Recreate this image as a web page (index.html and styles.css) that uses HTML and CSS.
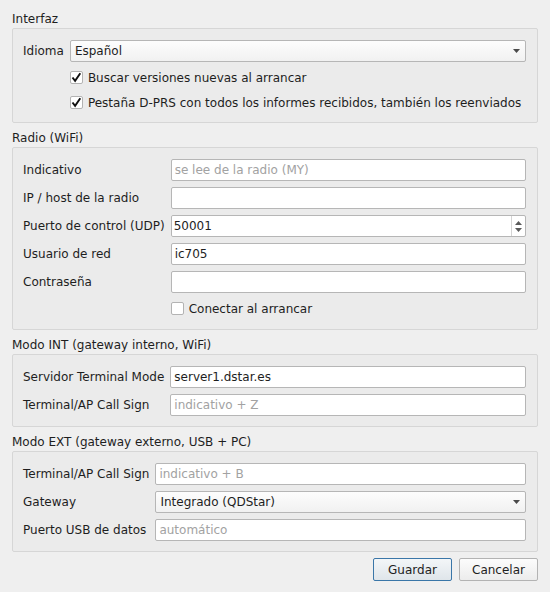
FILE: index.html
```html
<!DOCTYPE html>
<html lang="es">
<head>
    <meta charset="UTF-8">
    <meta name="viewport" content="width=device-width, initial-scale=1.0">
    <title>Preferencias</title>
    <link rel="stylesheet" href="styles.css">
</head>
<body>

    <!-- Interfaz -->
    <div class="group-title">Interfaz</div>
    <div class="group">
        <div class="form">
            <label>Idioma</label>
            <div class="combo">
                <span>Español</span>
                <svg class="arrow" width="7" height="4" viewBox="0 0 7 4"><path d="M0 0h7L3.5 4z"/></svg>
            </div>
            <div class="check-row">
                <span class="box"><svg width="11" height="11" viewBox="0 0 11 11"><path d="M1.5 5.5l2.6 3.4 5.2-7.6" fill="none" stroke="#111" stroke-width="1.9"/></svg></span>
                Buscar versiones nuevas al arrancar
            </div>
            <div class="check-row">
                <span class="box"><svg width="11" height="11" viewBox="0 0 11 11"><path d="M1.5 5.5l2.6 3.4 5.2-7.6" fill="none" stroke="#111" stroke-width="1.9"/></svg></span>
                Pestaña D-PRS con todos los informes recibidos, también los reenviados
            </div>
        </div>
    </div>

    <!-- Radio (WiFi) -->
    <div class="group-title">Radio (WiFi)</div>
    <div class="group radio">
        <div class="form">
            <label for="callsign">Indicativo</label>
            <input type="text" id="callsign" placeholder="se lee de la radio (MY)">

            <label for="host">IP / host de la radio</label>
            <input type="text" id="host">

            <label for="port">Puerto de control (UDP)</label>
            <div class="spin">
                <input type="text" id="port" value="50001">
                <div class="spin-buttons">
                    <svg width="7" height="4" viewBox="0 0 7 4"><path d="M0 4h7L3.5 0z"/></svg>
                    <svg width="7" height="4" viewBox="0 0 7 4"><path d="M0 0h7L3.5 4z"/></svg>
                </div>
            </div>

            <label for="user">Usuario de red</label>
            <input type="text" id="user" value="ic705">

            <label for="pass">Contraseña</label>
            <input type="text" id="pass">

            <div class="check-row">
                <span class="box"></span>
                Conectar al arrancar
            </div>
        </div>
    </div>

    <!-- Modo INT -->
    <div class="group-title">Modo INT (gateway interno, WiFi)</div>
    <div class="group">
        <div class="form">
            <label for="server">Servidor Terminal Mode</label>
            <input type="text" id="server" value="server1.dstar.es">

            <label for="intcall">Terminal/AP Call Sign</label>
            <input type="text" id="intcall" placeholder="indicativo + Z">
        </div>
    </div>

    <!-- Modo EXT -->
    <div class="group-title">Modo EXT (gateway externo, USB + PC)</div>
    <div class="group">
        <div class="form">
            <label for="extcall">Terminal/AP Call Sign</label>
            <input type="text" id="extcall" placeholder="indicativo + B">

            <label>Gateway</label>
            <div class="combo">
                <span>Integrado (QDStar)</span>
                <svg class="arrow" width="7" height="4" viewBox="0 0 7 4"><path d="M0 0h7L3.5 4z"/></svg>
            </div>

            <label for="usb">Puerto USB de datos</label>
            <input type="text" id="usb" placeholder="automático">
        </div>
    </div>

    <div class="buttons">
        <button type="button" class="default">Guardar</button>
        <button type="button">Cancelar</button>
    </div>

</body>
</html>
```

FILE: styles.css
```css
body {
    font-family: "DejaVu Sans", sans-serif;
    font-size: 12px;
    color: #1e1e1e;
    background: #efefef;
    margin: 0;
    padding: 10px 12px 0 12px;
}
.group-title {
    height: 18px;
    line-height: 18px;
}
.group {
    border: 1px solid #d6d6d6;
    border-radius: 2px;
    background: #ebebeb;
    padding: 11px 11px 10px 10px;
    margin-bottom: 6px;
}
.group.radio {
    padding-bottom: 11px;
}
.form {
    display: grid;
    grid-template-columns: auto 1fr;
    column-gap: 6px;
    row-gap: 6px;
    align-items: center;
}
label {
    white-space: nowrap;
}
input[type="text"] {
    height: 22px;
    box-sizing: border-box;
    border: 1px solid #b6b6b6;
    border-radius: 2px;
    background: #fff;
    padding: 0 3px;
    margin: 0;
    font-family: inherit;
    font-size: 12px;
    color: #1e1e1e;
    width: 100%;
    outline: none;
}
input::placeholder {
    color: #a2a2a2;
}
.combo {
    height: 22px;
    box-sizing: border-box;
    border: 1px solid #b6b6b6;
    border-radius: 2px;
    background: linear-gradient(#fdfdfd, #f1f1f1);
    padding: 0 3px 0 4px;
    display: flex;
    align-items: center;
    justify-content: space-between;
}
.arrow {
    fill: #4a4a4a;
    margin-right: 2px;
}
.spin {
    display: flex;
    height: 22px;
    box-sizing: border-box;
    border: 1px solid #b6b6b6;
    border-radius: 2px;
    background: #fff;
}
.spin input[type="text"] {
    border: none;
    height: 20px;
    flex: 1;
    padding-left: 2px;
}
.spin-buttons {
    width: 13px;
    border-left: 1px solid #d4d4d4;
    display: flex;
    flex-direction: column;
    align-items: center;
    justify-content: center;
    gap: 3px;
    fill: #5a5a5a;
}
.check-row {
    grid-column: 2;
    height: 19px;
    display: flex;
    align-items: center;
}
.box {
    width: 13px;
    height: 13px;
    box-sizing: border-box;
    border: 1px solid #b3b3b3;
    border-radius: 2px;
    background: #fff;
    margin-right: 5px;
    display: flex;
    align-items: center;
    justify-content: center;
}
.buttons {
    display: flex;
    justify-content: flex-end;
    gap: 7px;
    margin-top: 6px;
}
button {
    width: 79px;
    height: 23px;
    font-family: inherit;
    font-size: 12px;
    color: #1e1e1e;
    border: 1px solid #b3b3b3;
    border-radius: 2px;
    background: linear-gradient(#fcfcfc, #ececec);
    padding: 0;
}
button.default {
    border-color: #3a76a8;
    background: linear-gradient(#f3f6f8, #dfe5ea);
}
```
